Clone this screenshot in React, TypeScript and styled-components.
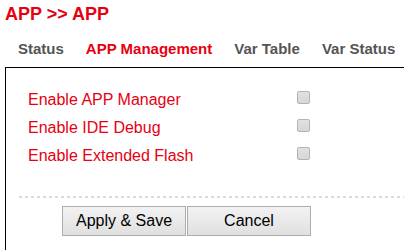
import { createGlobalStyle } from "styled-components";
import styled from "styled-components";

const RED = "#e60012";

const GlobalStyle = createGlobalStyle`
  html, body {
    margin: 0;
    padding: 0;
    background: #fff;
    overflow: hidden;
    font-family: "Liberation Sans", Arial, sans-serif;
  }
`;

const Page = styled.div`
  width: 404px;
  height: 250px;
  overflow: hidden;
  padding-left: 5px;
  box-sizing: border-box;
`;

const Title = styled.h1`
  margin: 4px 0 0;
  font-size: 18px;
  line-height: 20px;
  font-weight: bold;
  color: ${RED};
`;

const Tabs = styled.ul`
  display: flex;
  margin: 15px 0 0;
  padding: 0 0 8px 2px;
  list-style: none;
`;

const Tab = styled.li<{ $active?: boolean }>`
  padding: 0 11px;
  font-size: 15px;
  line-height: 20px;
  font-weight: bold;
  white-space: nowrap;
  color: ${(p) => (p.$active ? RED : "#555")};
`;

const Panel = styled.div`
  width: 440px;
  height: 200px;
  border: 1px solid #000;
  padding-top: 18px;
  box-sizing: border-box;
`;

const Row = styled.label`
  display: flex;
  align-items: flex-start;
  height: 28px;
  padding-left: 22px;
`;

const Label = styled.span`
  width: 269px;
  font-size: 16px;
  line-height: 28px;
  color: ${RED};
`;

const Check = styled.span`
  width: 11px;
  height: 11px;
  margin-top: 5px;
  border: 1px solid #b4b4b4;
  border-radius: 2px;
  background: linear-gradient(#e2e2e2, #d6d6d6);
`;

const Divider = styled.div`
  margin: 26px 0 0 13px;
  height: 2px;
  background: repeating-linear-gradient(to right, #dcdcdc 0 3px, transparent 3px 6px);
`;

const Buttons = styled.div`
  display: flex;
  gap: 1px;
  margin: 8px 0 0 56px;
`;

const Button = styled.button`
  width: 124px;
  height: 30px;
  padding: 0;
  font-family: "Liberation Sans", Arial, sans-serif;
  font-size: 16px;
  color: #000;
  border: 1px solid #adadad;
  border-radius: 0;
  background: linear-gradient(#f2f2f2, #e0e0e0);
`;

const options = ["Enable APP Manager", "Enable IDE Debug", "Enable Extended Flash"];
const tabs = ["Status", "APP Management", "Var Table", "Var Status"];

export default function App() {
  return (
    <>
      <GlobalStyle />
      <Page>
        <Title>APP &gt;&gt; APP</Title>
        <Tabs>
          {tabs.map((t) => (
            <Tab key={t} $active={t === "APP Management"}>
              {t}
            </Tab>
          ))}
        </Tabs>
        <Panel>
          {options.map((o) => (
            <Row key={o}>
              <Label>{o}</Label>
              <Check />
            </Row>
          ))}
          <Divider />
          <Buttons>
            <Button>Apply &amp; Save</Button>
            <Button>Cancel</Button>
          </Buttons>
        </Panel>
      </Page>
    </>
  );
}
